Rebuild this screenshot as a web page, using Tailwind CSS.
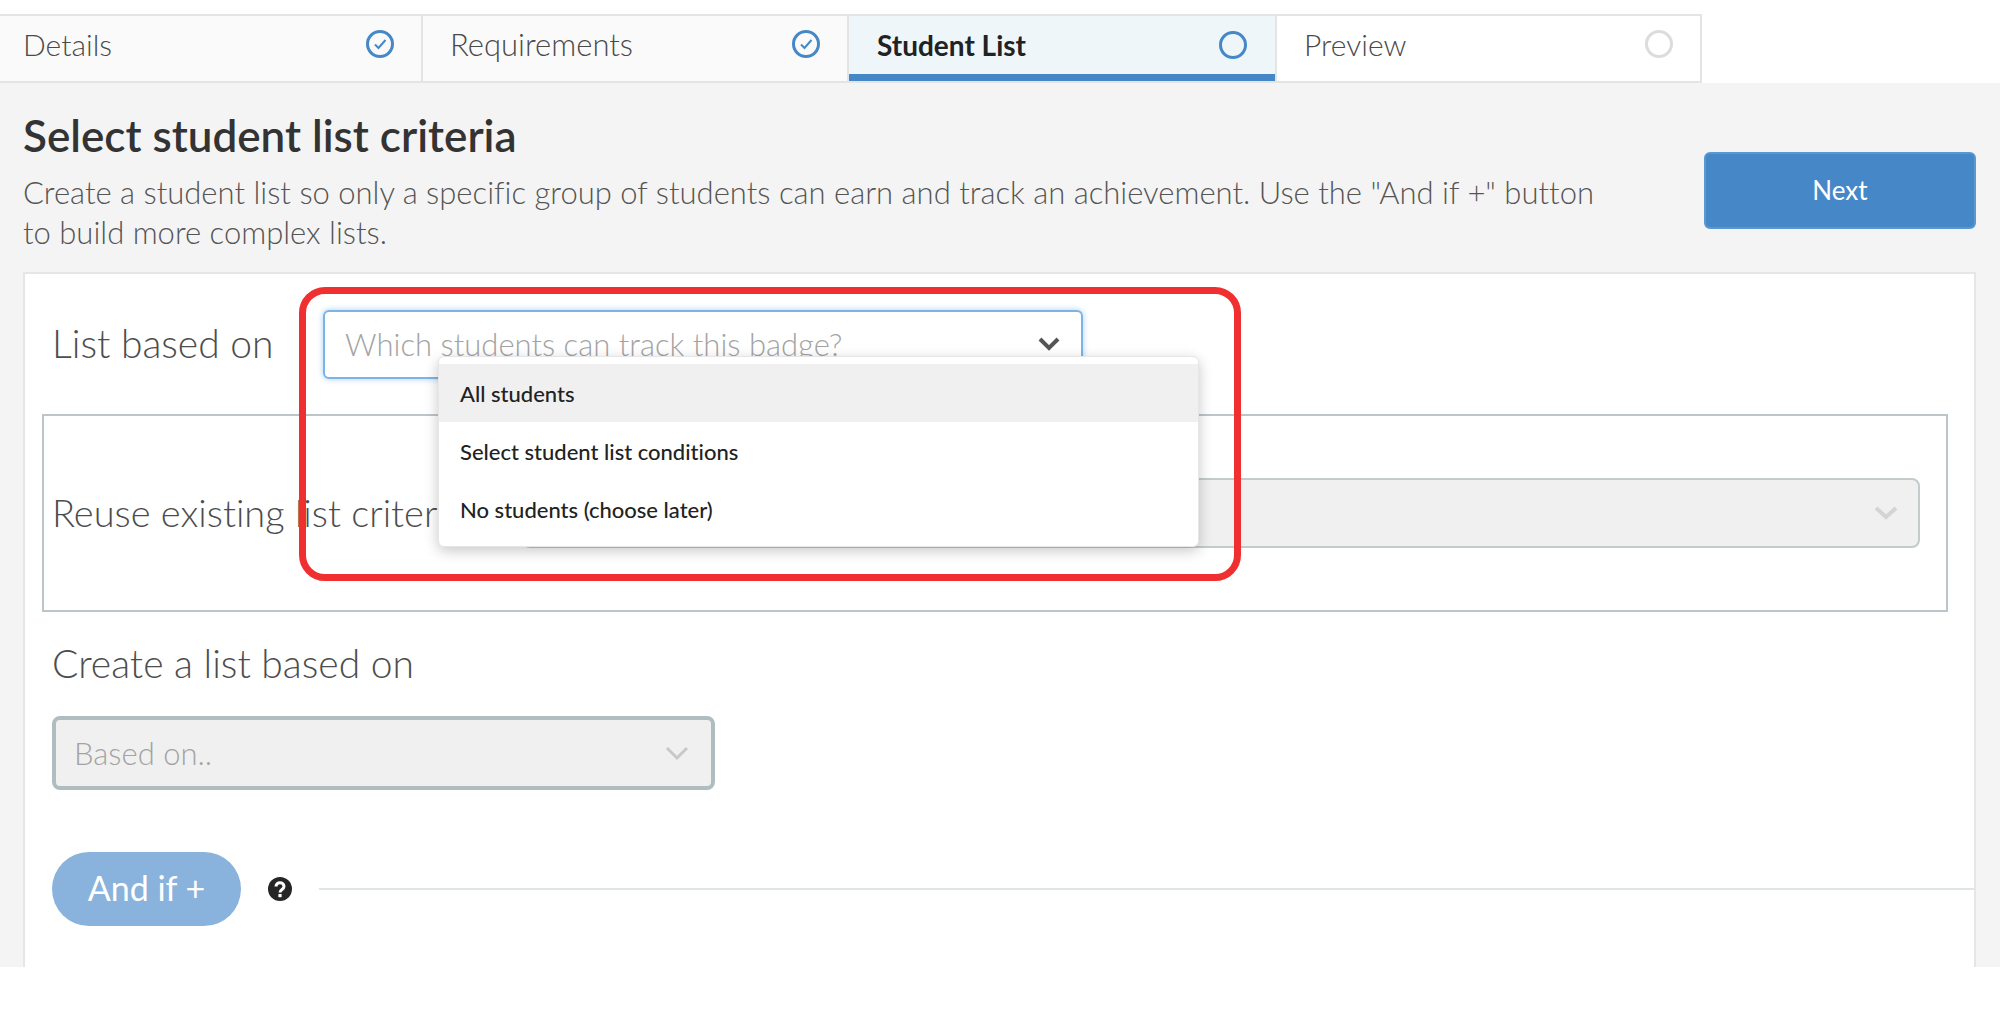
<!DOCTYPE html>
<html lang="en">
<head>
    <meta charset="UTF-8">
    <title>Select student list criteria</title>
    <script src="https://cdn.jsdelivr.net/npm/@tailwindcss/browser@4"></script>
</head>
<body class="bg-white h-[1020px] overflow-hidden font-['Lato',sans-serif] text-[#3b3b3b] [font-variant-ligatures:none]">

    <!-- steps -->
    <nav class="pt-[14px] h-[83px] flex">
        <div class="w-[423px] bg-[#fafafa] border-y-2 border-r-2 border-[#e4e4e4] pl-[23px] pr-[26px] pb-[9px] flex items-center justify-between text-[30px] font-light text-[#4a4a4a]">
            <span>Details</span>
            <svg class="w-[30px] h-[30px]" viewBox="0 0 30 30" fill="none"><circle cx="15" cy="15" r="12.5" stroke="#4688c7" stroke-width="3"/><path d="M10 15.5l3.5 3.5 7-8" stroke="#4688c7" stroke-width="2"/></svg>
        </div>
        <div class="w-[426px] bg-[#fafafa] border-y-2 border-r-2 border-[#e4e4e4] pl-[27px] pr-[26px] pb-[9px] flex items-center justify-between text-[31px] font-light text-[#4a4a4a]">
            <span>Requirements</span>
            <svg class="w-[30px] h-[30px]" viewBox="0 0 30 30" fill="none"><circle cx="15" cy="15" r="12.5" stroke="#4688c7" stroke-width="3"/><path d="M10 15.5l3.5 3.5 7-8" stroke="#4688c7" stroke-width="2"/></svg>
        </div>
        <div class="w-[426px] mb-[2px] bg-[#eef6fa] border-t-2 border-b-[7px] border-t-[#e4e4e4] border-b-[#4688c7] shadow-[0_2px_0_#e4e4e4] pl-[28px] pr-[27px] pb-[1px] flex items-center justify-between text-[28px] font-bold text-[#222]">
            <span>Student List</span>
            <svg class="w-[30px] h-[30px]" viewBox="0 0 30 30" fill="none"><circle cx="15" cy="15" r="12.5" stroke="#4688c7" stroke-width="3"/></svg>
        </div>
        <div class="w-[427px] bg-white border-2 border-[#e4e4e4] pl-[27px] pr-[26px] pb-[9px] flex items-center justify-between text-[30px] font-light text-[#4a4a4a]">
            <span>Preview</span>
            <svg class="w-[30px] h-[30px]" viewBox="0 0 30 30" fill="none"><circle cx="15" cy="15" r="12.5" stroke="#dcdcdc" stroke-width="3"/></svg>
        </div>
    </nav>

    <main class="h-[884px] bg-[#f4f4f4] pl-[23px] pr-[24px] overflow-hidden">
        <div class="flex justify-between h-[189px]">
            <div class="w-[1598px]">
                <h1 class="text-[44px] leading-[50px] pt-[27px] font-semibold text-[#333]">Select student list criteria</h1>
                <p class="text-[31px] leading-[40px] mt-[12px] font-light text-[#555]">Create a student list so only a specific group of students can earn and track an achievement. Use the "And if +" button to build more complex lists.</p>
            </div>
            <button class="mt-[69px] w-[272px] h-[77px] bg-[#4688c7] border-2 border-[#5b97d0] rounded-[6px] text-white text-[26px] font-normal">Next</button>
        </div>

        <section class="relative bg-white border-2 border-[#e6e6e6] border-b-0 h-[700px] pl-[17px]">
            <div class="flex items-center h-[106px] pt-[34px]">
                <label class="w-[281px] pl-[10px] pb-[2px] text-[39px] font-light text-[#4d4d4d]">List based on</label>
                <div class="w-[760px] h-[69px] bg-white border-2 border-[#7db4e6] rounded-[6px] shadow-[0_0_6px_#a9d0f2] pl-[20px] pr-[20px] flex items-center justify-between text-[31px] font-light text-[#a3a3a3]">
                    <span>Which students can track this badge?</span>
                    <svg class="w-[24px] h-[16px]" viewBox="0 0 24 16" fill="none"><path d="M3 3l9 9 9-9" stroke="#555" stroke-width="4"/></svg>
                </div>
            </div>

            <div class="mt-[34px] w-[1906px] h-[198px] border-2 border-[#bcc6c8] flex items-center pl-[8px] pr-[26px]">
                <label class="w-[470px] shrink-0 pb-[2px] text-[38px] font-light text-[#4d4d4d] whitespace-nowrap">Reuse existing list criteria</label>
                <div class="flex-1 h-[70px] bg-[#f0f0f0] border-2 border-[#c3cbcd] rounded-[8px] flex items-center justify-end pr-[20px]">
                    <svg class="w-[24px] h-[16px]" viewBox="0 0 24 16" fill="none"><path d="M2 3l10 9 10-9" stroke="#d4d4d4" stroke-width="4"/></svg>
                </div>
            </div>

            <label class="block mt-[29px] pl-[10px] text-[39px] leading-[44px] font-light text-[#4d4d4d]">Create a list based on</label>
            <div class="mt-[31px] ml-[10px] w-[663px] h-[74px] bg-[#f0f0f0] border-4 border-[#b0bdc0] rounded-[8px] pl-[18px] pr-[22px] flex items-center justify-between text-[31px] font-light text-[#a3a3a3]">
                <span>Based on..</span>
                <svg class="w-[24px] h-[16px]" viewBox="0 0 24 16" fill="none"><path d="M2 3l10 10 10-10" stroke="#c8c8c8" stroke-width="3"/></svg>
            </div>

            <div class="mt-[62px] ml-[10px] flex items-center">
                <button class="w-[189px] h-[74px] rounded-[37px] bg-[#89b3dc] text-white text-[34px] font-normal pb-[3px]">And if +</button>
                <svg class="ml-[27px] w-[24px] h-[24px]" viewBox="0 0 24 24"><circle cx="12" cy="12" r="12" fill="#262626"/><path d="M8 9.5c0-5 8-5 8 0 0 3-4 3-4 6" fill="none" stroke="#fff" stroke-width="3"/><rect x="10.4" y="17" width="3.2" height="3.2" fill="#fff"/></svg>
                <div class="ml-[27px] flex-1 h-[2px] bg-[#dfe5e5]"></div>
            </div>

            <!-- open menu -->
            <ul class="absolute left-[413px] top-[82px] w-[761px] h-[191px] bg-white rounded-[6px] border border-[#e6e6e6] shadow-[0_4px_14px_rgba(0,0,0,0.22)] pt-[7px] text-[22px] font-medium text-[#222]">
                <li class="h-[58px] pl-[21px] flex items-center bg-[#f0f0f0]">All students</li>
                <li class="h-[58px] pl-[21px] flex items-center">Select student list conditions</li>
                <li class="h-[58px] pl-[21px] flex items-center">No students (choose later)</li>
            </ul>
            <!-- annotation -->
            <div class="absolute left-[274px] top-[13px] w-[942px] h-[294px] border-[7px] border-[#f03030] rounded-[26px]"></div>
        </section>
    </main>
</body>
</html>
